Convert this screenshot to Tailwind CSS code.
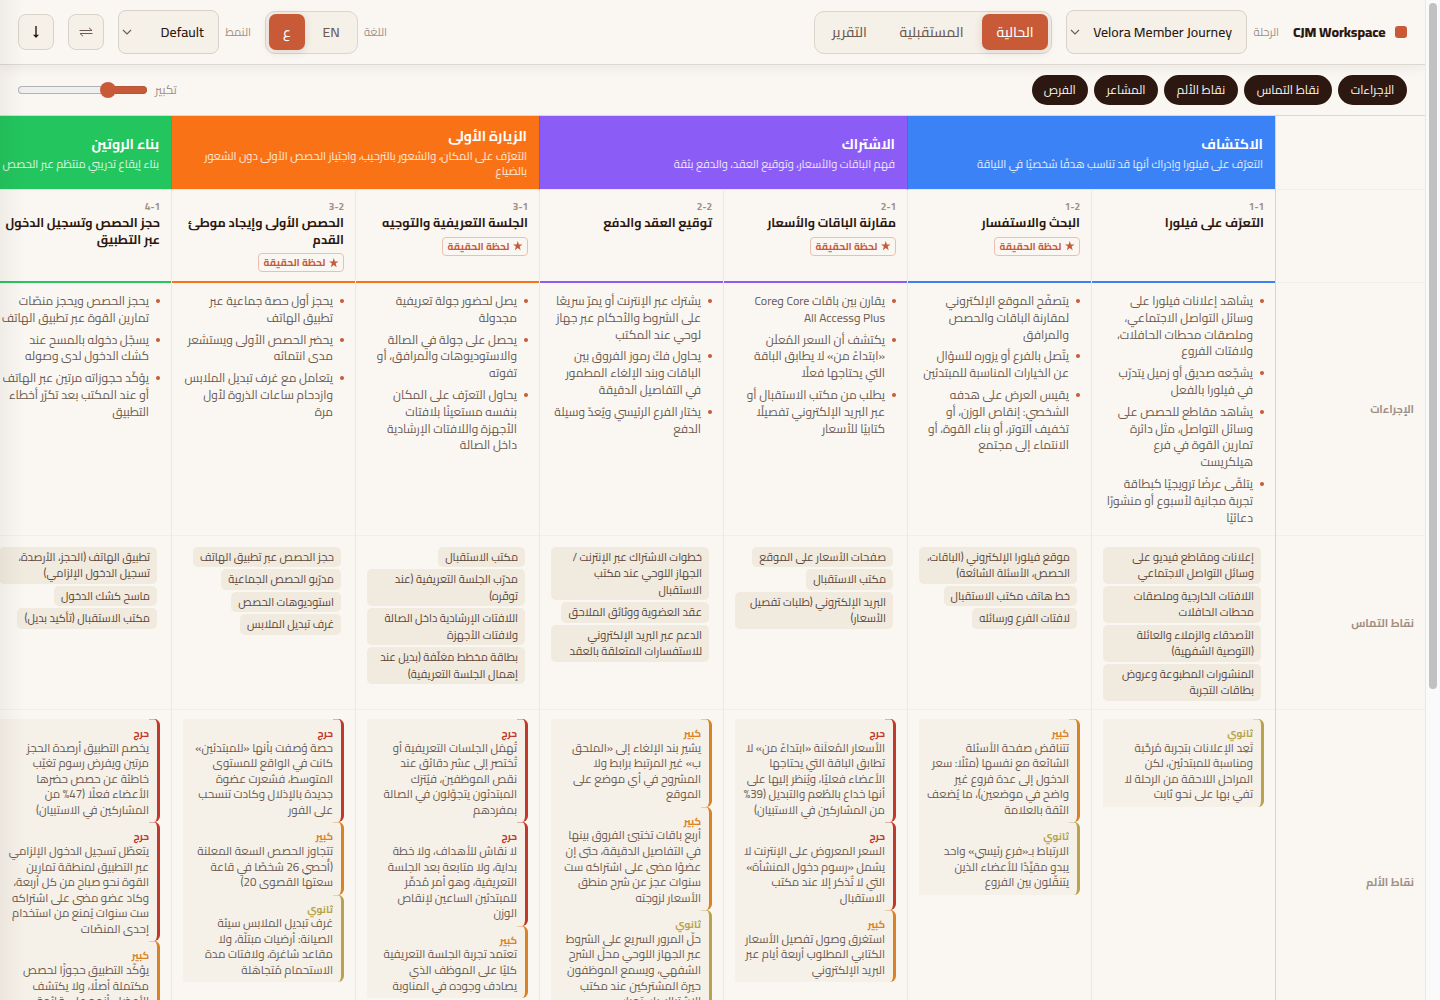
<!DOCTYPE html>
<html lang="ar" dir="rtl">
<head>
    <meta charset="UTF-8">
    <meta name="viewport" content="width=device-width, initial-scale=1.0">
    <title>CJM Workspace</title>
    <script src="https://cdn.jsdelivr.net/npm/@tailwindcss/browser@4"></script>
</head>
<body class="h-[1000px] overflow-hidden bg-[#faf7f2] font-['Cairo','Noto_Sans',sans-serif] text-[#2c1810]">
    <div class="flex h-full">
        <!-- Scrollbar -->
        <div class="w-[15px] shrink-0 border-l border-[#e8e8e8] bg-[#fafafa] pt-[3px] pr-[3px] pl-[3px]">
            <div class="h-[686px] w-2 rounded-full bg-[#c1c1c1]"></div>
        </div>

        <div class="relative w-[1425px] shrink-0 overflow-hidden">
            <!-- Top bar -->
            <header class="relative z-10 flex h-[65px] items-center justify-between border-b border-[#dcd7d1] bg-[#faf7f2] px-[18px] shadow-[0_2px_12px_rgba(44,24,16,0.08)]">
                <div class="flex items-center">
                    <span class="size-3 rounded-[3px] bg-[#c85a38]"></span>
                    <b class="mr-[9px] w-[93px] text-sm font-extrabold tracking-[-0.14px] whitespace-nowrap" dir="ltr">CJM Workspace</b>
                    <span class="mr-[14px] w-[26px] text-[11.200px] whitespace-nowrap text-[#a08f84]">الرحلة</span>
                    <div class="mr-[6px] flex h-11 w-[181px] items-center justify-between rounded-lg border border-[#d9d2c9] bg-[#f5f0e8] pr-[14px] pl-[3px] text-sm font-medium">
                        <span dir="ltr" class="whitespace-nowrap">Velora Member Journey</span>
                        <svg class="size-[10px]" viewBox="0 0 10 10" fill="none" stroke="#6b5a50" stroke-width="1.1"><path d="M1 3l4 4 4-4"/></svg>
                    </div>
                    <nav class="mr-[14px] flex h-[43px] w-[238px] items-center rounded-[10px] border border-[#dcd5cc] bg-[#f5f0e8] p-[3px] text-sm font-medium text-[#6b5a50]">
                        <span class="flex h-9 w-[66px] items-center justify-center rounded-[7px] bg-[#c85a38] text-white shadow-[0_2px_10px_rgba(44,24,16,0.12)]">الحالية</span>
                        <span class="flex h-9 w-[101px] items-center justify-center">المستقبلية</span>
                        <span class="flex h-9 flex-1 items-center justify-center">التقرير</span>
                    </nav>
                </div>
                <div class="flex items-center">
                    <span class="w-[23px] text-[11.200px] whitespace-nowrap text-[#a08f84]">اللغة</span>
                    <div class="mr-[6px] flex h-[43px] w-[93px] items-center rounded-[10px] border border-[#dcd5cc] bg-[#f5f0e8] p-[3px] text-sm font-medium text-[#6b5a50]">
                        <span class="flex h-9 flex-1 items-center justify-center pl-[3px]">EN</span>
                        <span class="flex size-9 items-center justify-center rounded-[7px] bg-[#c85a38] text-white shadow-[0_2px_10px_rgba(44,24,16,0.12)]">ع</span>
                    </div>
                    <span class="mr-[14px] w-[26px] text-[11.200px] whitespace-nowrap text-[#a08f84]">النمط</span>
                    <div class="mr-[6px] flex h-11 w-[101px] items-center justify-between rounded-lg border border-[#d9d2c9] bg-[#f5f0e8] pr-[14px] pl-[3px] text-sm font-medium">
                        <span>Default</span>
                        <svg class="size-[10px]" viewBox="0 0 10 10" fill="none" stroke="#6b5a50" stroke-width="1.1"><path d="M1 3l4 4 4-4"/></svg>
                    </div>
                    <div class="mr-[14px] flex size-9 items-center justify-center rounded-lg border border-[#d9d2c9] bg-[#f5f0e8]">
                        <svg class="h-[10px] w-[14px]" viewBox="0 0 14 10" fill="none" stroke="#6b5a50"><path d="M.5 3.500h12.500l-3-2.800M13.500 6.500H1l3 2.800"/></svg>
                    </div>
                    <div class="mr-[14px] flex size-9 items-center justify-center rounded-lg border border-[#d9d2c9] bg-[#f5f0e8]">
                        <svg class="h-3 w-2" viewBox="0 0 8 12"><path d="M3.300 0h1.400v8.700H7L4 12 1 8.700h2.300z" fill="#2c1810"/></svg>
                    </div>
                </div>
            </header>

            <!-- Row filters and zoom -->
            <div class="flex h-[51px] items-center justify-between border-b border-[#dcd7d1] px-[18px]">
                <div class="flex gap-[6px] text-xs whitespace-nowrap text-[#faf7f2]">
                    <span class="flex h-[30px] w-[69px] items-center justify-center rounded-full bg-[#2c1810]">الإجراءات</span>
                    <span class="flex h-[30px] w-[88px] items-center justify-center rounded-full bg-[#2c1810]">نقاط التماس</span>
                    <span class="flex h-[30px] w-[74px] items-center justify-center rounded-full bg-[#2c1810]">نقاط الألم</span>
                    <span class="flex h-[30px] w-[64px] items-center justify-center rounded-full bg-[#2c1810]">المشاعر</span>
                    <span class="flex h-[30px] w-[56.500px] items-center justify-center rounded-full bg-[#2c1810]">الفرص</span>
                </div>
                <div class="flex items-center gap-2">
                    <span class="text-xs text-[#a08f84]">تكبير</span>
                    <div class="flex h-4 w-[129px] items-center">
                        <div class="h-2 w-[35px] rounded-r-full border border-l-0 border-[#b0573c] bg-[#c85a38]"></div>
                        <div class="relative -mx-1 size-4 shrink-0 rounded-full bg-[#c85a38]"></div>
                        <div class="h-2 flex-1 rounded-l-full border border-r-0 border-[#b2b2b2] bg-[#efefef]"></div>
                    </div>
                </div>
            </div>

            <!-- Journey map -->
            <div class="flex w-[1438px]">
                <div class="w-[150px] shrink-0 border-l border-[#d9d4ce] text-[11px] font-bold text-[#a08f84]">
                    <div class="h-[74px] border-b border-[#f2eee9]"></div>
                    <div class="h-[93px] border-b border-[#f2eee9]"></div>
                    <div class="flex h-[252.500px] items-center border-b border-[#f2eee9] pr-[11px]">الإجراءات</div>
                    <div class="flex h-[174.600px] items-center border-b border-[#f2eee9] pt-px pr-[11px]">نقاط التماس</div>
                    <div class="flex h-[345px] items-center pr-[11px]">نقاط الألم</div>
                </div>
                <div id="stages" class="flex"></div>
            </div>

            <!-- Scroll edge shade -->
            <div class="absolute inset-y-0 left-0 z-20 w-6 bg-linear-to-r from-[#2c1810]/5 to-transparent"></div>
        </div>
    </div>

    <script>
        const LEVELS = {
            c: { label: 'حرج', text: 'text-[#c0392b]', border: 'border-[#c0392b]' },
            m: { label: 'كبير', text: 'text-[#d98324]', border: 'border-[#d98324]' },
            n: { label: 'ثانوي', text: 'text-[#b8a44c]', border: 'border-[#b8a44c]' },
        };

        // "|" marks a line break inside a text
        const stages = [
            {
                name: 'الاكتشاف', bg: 'bg-[#3b82f6]', line: 'border-b-[#3b82f6]', width: 'w-[368px]',
                goal: 'التعرّف على فيلورا وإدراك أنها قد تناسب هدفًا شخصيًا في اللياقة',
                steps: [
                    {
                        id: '1-1', title: 'التعرّف على فيلورا',
                        actions: ['يشاهد إعلانات فيلورا على|وسائل التواصل الاجتماعي،|وملصقات محطات الحافلات،|ولافتات الفروع', 'يشجّعه صديق أو زميل يتدرّب|في فيلورا بالفعل', 'يشاهد مقاطع للحصص على|وسائل التواصل، مثل دائرة|تمارين القوة في فرع|هيلكريست', 'يتلقّى عرضًا ترويجيًا كبطاقة|تجربة مجانية لأسبوع أو منشورًا|دعائيًا'],
                        touch: ['إعلانات ومقاطع فيديو على|وسائل التواصل الاجتماعي', 'اللافتات الخارجية وملصقات|محطات الحافلات', 'الأصدقاء والزملاء والعائلة|(التوصية الشفهية)', 'المنشورات المطبوعة وعروض|بطاقات التجربة'],
                        pains: [['n', 'تَعِد الإعلانات بتجربة مُرحِّبة|ومناسبة للمبتدئين، لكن|المراحل اللاحقة من الرحلة لا|تفي بها على نحو ثابت']],
                    },
                    {
                        id: '1-2', title: 'البحث والاستفسار', moment: true,
                        actions: ['يتصفّح الموقع الإلكتروني|لمقارنة الباقات والحصص|والمرافق', 'يتّصل بالفرع أو يزوره للسؤال|عن الخيارات المناسبة للمبتدئين', 'يقيس العرض على هدفه|الشخصي: إنقاص الوزن، أو|تخفيف التوتر، أو بناء القوة، أو|الانتماء إلى مجتمع'],
                        touch: ['موقع فيلورا الإلكتروني (الباقات،|الحصص، الأسئلة الشائعة)', 'خط هاتف مكتب الاستقبال', 'لافتات الفرع ورسائله'],
                        pains: [['m', 'تتناقض صفحة الأسئلة|الشائعة مع نفسها (مثلًا: سعر|الدخول إلى عدة فروع غير|واضح في موضعين)، ما يُضعف|الثقة بالعلامة'], ['n', 'الارتباط بـ«فرع رئيسي» واحد|يبدو مقيِّدًا للأعضاء الذين|يتنقّلون بين الفروع']],
                    },
                ],
            },
            {
                name: 'الاشتراك', bg: 'bg-[#8b5cf6]', line: 'border-b-[#8b5cf6]', width: 'w-[368px]',
                goal: 'فهم الباقات والأسعار، وتوقيع العقد، والدفع بثقة',
                steps: [
                    {
                        id: '2-1', title: 'مقارنة الباقات والأسعار', moment: true,
                        actions: ['يقارن بين باقات Core وCore|Plus وAll Access', 'يكتشف أن السعر المُعلَن|«ابتداءً من» لا يطابق الباقة|التي يحتاجها فعلًا', 'يطلب من مكتب الاستقبال أو|عبر البريد الإلكتروني تفصيلًا|كتابيًا للأسعار'],
                        touch: ['صفحات الأسعار على الموقع', 'مكتب الاستقبال', 'البريد الإلكتروني (طلبات تفصيل|الأسعار)'],
                        pains: [['c', 'الأسعار المُعلَنة «ابتداءً من» لا|تطابق الباقة التي يحتاجها|الأعضاء فعليًا، ويُنظر إليها على|أنها خداع بالطُعم والتبديل (39%|من المشاركين في الاستبيان)'], ['c', 'السعر المعروض على الإنترنت لا|يشمل «رسوم دخول المنشأة»|التي لا تُذكر إلا عند مكتب|الاستقبال'], ['m', 'استغرق وصول تفصيل الأسعار|الكتابي المطلوب أربعة أيام عبر|البريد الإلكتروني']],
                    },
                    {
                        id: '2-2', title: 'توقيع العقد والدفع',
                        actions: ['يشترك عبر الإنترنت أو يمرّ سريعًا|على الشروط والأحكام عبر جهاز|لوحي عند المكتب', 'يحاول فكّ رموز الفروق بين|الباقات وبند الإلغاء المطمور|في التفاصيل الدقيقة', 'يختار الفرع الرئيسي ويُعدّ وسيلة|الدفع'],
                        touch: ['خطوات الاشتراك عبر الإنترنت /|الجهاز اللوحي عند مكتب|الاستقبال', 'عقد العضوية ووثائق الملاحق', 'الدعم عبر البريد الإلكتروني|للاستفسارات المتعلقة بالعقد'],
                        pains: [['m', 'يشير بند الإلغاء إلى «الملحق|ب» غير المرتبط برابط ولا|المشروح في أي موضع على|الموقع'], ['m', 'أربع باقات تختبئ الفروق بينها|في التفاصيل الدقيقة، حتى إن|عضوًا مضى على اشتراكه ست|سنوات عجز عن شرح منطق|الأسعار لزوجته'], ['n', 'حلّ المرور السريع على الشروط|عبر الجهاز اللوحي محلّ الشرح|الشفهي، ويسمع الموظفون|حيرة المشتركين عند مكتب|الاشتراك باستمرار']],
                    },
                ],
            },
            {
                name: 'الزيارة الأولى', bg: 'bg-[#f97316]', line: 'border-b-[#f97316]', width: 'w-[368px]',
                goal: 'التعرّف على المكان، والشعور بالترحيب، واجتياز الحصص الأولى دون الشعور|بالضياع',
                steps: [
                    {
                        id: '3-1', title: 'الجلسة التعريفية والتوجيه', moment: true,
                        actions: ['يصل لحضور جولة تعريفية|مجدولة', 'يحصل على جولة في الصالة|والاستوديوهات والمرافق، أو|تفوته', 'يحاول التعرّف على المكان|بنفسه مستعينًا بلافتات|الأجهزة واللافتات الإرشادية|داخل الصالة'],
                        touch: ['مكتب الاستقبال', 'مدرّب الجلسة التعريفية (عند|توفّره)', 'اللافتات الإرشادية داخل الصالة|ولافتات الأجهزة', 'بطاقة مخطط مغلّفة (بديل عند|إهمال الجلسة التعريفية)'],
                        pains: [['c', 'تُهمَل الجلسات التعريفية أو|تُختصر إلى عشر دقائق عند|نقص الموظفين، فيُترَك|المبتدئون يتجوّلون في الصالة|بمفردهم'], ['c', 'لا نقاش للأهداف، ولا خطة|بداية، ولا متابعة بعد الجلسة|التعريفية، وهو أمر مُدمِّر|للمبتدئين الساعين لإنقاص|الوزن'], ['m', 'تعتمد تجربة الجلسة التعريفية|كليًا على الموظف الذي|يصادف وجوده في المناوبة']],
                    },
                    {
                        id: '3-2', title: 'الحصص الأولى وإيجاد موطئ|القدم', moment: true,
                        actions: ['يحجز أول حصة جماعية عبر|تطبيق الهاتف', 'يحضر الحصص الأولى ويستشعر|مدى انتمائه', 'يتعامل مع غرف تبديل الملابس|وازدحام ساعات الذروة لأول|مرة'],
                        touch: ['حجز الحصص عبر تطبيق الهاتف', 'مدرّبو الحصص الجماعية', 'استوديوهات الحصص', 'غرف تبديل الملابس'],
                        pains: [['c', 'حصة وُصفت بأنها «للمبتدئين»|كانت في الواقع للمستوى|المتوسط، فشعرت عضوة|جديدة بالإذلال وكادت تنسحب|على الفور'], ['m', 'تتجاوز الحصص السعة المعلنة|(أُحصي 26 شخصًا في قاعة|سعتها القصوى 20)'], ['n', 'غرف تبديل الملابس سيئة|الصيانة: أرضيات مبتلّة، ولا|مقاعد شاغرة، ولافتات مدة|الاستحمام مُتجاهَلة']],
                    },
                ],
            },
            {
                name: 'بناء الروتين', bg: 'bg-[#22c55e]', line: 'border-b-[#22c55e]', width: 'w-[184px]',
                goal: 'بناء إيقاع تدريبي منتظم عبر الحصص',
                steps: [
                    {
                        id: '4-1', title: 'حجز الحصص وتسجيل الدخول|عبر التطبيق',
                        actions: ['يحجز الحصص ويحجز منصّات|تمارين القوة عبر تطبيق الهاتف', 'يسجّل دخوله بالمسح عند|كشك الدخول لدى وصوله', 'يؤكّد حجوزاته مرتين عبر الهاتف|أو عند المكتب بعد تكرّر أخطاء|التطبيق'],
                        touch: ['تطبيق الهاتف (الحجز، الأرصدة،|تسجيل الدخول الإلزامي)', 'ماسح كشك الدخول', 'مكتب الاستقبال (تأكيد بديل)'],
                        pains: [['c', 'يخصم التطبيق أرصدة الحجز|مرتين ويفرض رسوم تغيّب|خاطئة عن حصص حضرها|الأعضاء فعلًا (47% من|المشاركين في الاستبيان)'], ['c', 'يتعطّل تسجيل الدخول الإلزامي|عبر التطبيق لمنطقة تمارين|القوة نحو صباح من كل أربعة،|وكاد عضو مضى على اشتراكه|ست سنوات يُمنع من استخدام|إحدى المنصّات'], ['m', 'يؤكّد التطبيق حجوزًا لحصص|مكتملة أصلًا، ولا يكتشف|الأعضاء أنهم على قائمة']],
                    },
                ],
            },
        ];

        const lines = (text) => text.replaceAll('|', '<br>');

        const stepColumn = (step, stage) => `
            <div class="w-[184px] shrink-0 border-l border-[#ece8e2] whitespace-nowrap">
                <div class="h-[93px] border-b-2 ${stage.line} pt-[9px] pr-[11px]">
                    <div class="text-[10px] leading-4 font-bold text-[#a08f84]"><bdo dir="ltr">${step.id}</bdo></div>
                    <div class="text-[12.500px] leading-[16.7px] font-bold">${lines(step.title)}</div>
                    ${step.moment ? `<div class="mt-[4.900px] flex h-[19px] w-[86px] items-center justify-center gap-[3.500px] rounded border border-[#ebbfb0] text-[10px] font-bold text-[#c85a38]">
                        <svg class="size-[9.500px]" viewBox="0 0 10 10" fill="currentColor"><path d="M5 0l1.250 3.600H10L7 5.900 8.100 9.700 5 7.400 1.900 9.700 3 5.900 0 3.600h3.750z"/></svg>
                        <span>لحظة الحقيقة</span>
                    </div>` : ''}
                </div>
                <ul class="h-[252.500px] space-y-[5px] border-b border-[#f2eee9] pt-[10px] pr-[11px] text-xs leading-[16.8px] text-[#6b5a50]">
                    ${step.actions.map((a) => `<li class="flex gap-[7px]"><i class="mt-[6px] size-1 shrink-0 rounded-full bg-[#c85a38]"></i><span>${lines(a)}</span></li>`).join('')}
                </ul>
                <div class="flex h-[174.600px] flex-col items-start gap-[2px] border-b border-[#f2eee9] pt-[11px] pr-[14px] text-[11.100px] leading-[16.5px] text-[#5c463a]">
                    ${step.touch.map((t) => `<div class="${t.includes('|') ? 'w-[158px]' : ''} rounded-[5px] bg-[#f0eadf] px-[7px] py-[2px]">${lines(t)}</div>`).join('')}
                </div>
                <div class="pt-[9px] pr-[11px]">
                    ${step.pains.map(([level, text]) => `<div class="relative w-[161px] rounded-r-md border-r-[3px] ${LEVELS[level].border} bg-[#f5f0e8] pt-[8px] pr-2 pb-[3.800px] text-[11.500px] leading-[15.6px] text-[#6b5a50]">
                        <i class="absolute top-0 right-0 h-px w-2 bg-current opacity-35 ${LEVELS[level].text}"></i>
                        <div class="mb-[0.600px] text-[10px] leading-[13px] font-bold ${LEVELS[level].text}">${LEVELS[level].label}</div>
                        ${lines(text)}
                    </div>`).join('')}
                </div>
            </div>`;

        document.getElementById('stages').innerHTML = stages.map((stage) => `
            <section class="flex shrink-0 flex-col">
                <div class="${stage.width} ${stage.bg} flex h-[74px] flex-col justify-center border-b border-b-[#ece8e2] border-l border-l-black/10 pt-px pr-3 whitespace-nowrap text-white">
                    <h2 class="mb-[2.600px] text-sm leading-5 font-bold">${stage.name}</h2>
                    <p class="text-[11.120px] leading-[15.4px] text-white/85">${lines(stage.goal)}</p>
                </div>
                <div class="flex flex-1">${stage.steps.map((step) => stepColumn(step, stage)).join('')}</div>
            </section>`).join('');
    </script>
</body>
</html>
